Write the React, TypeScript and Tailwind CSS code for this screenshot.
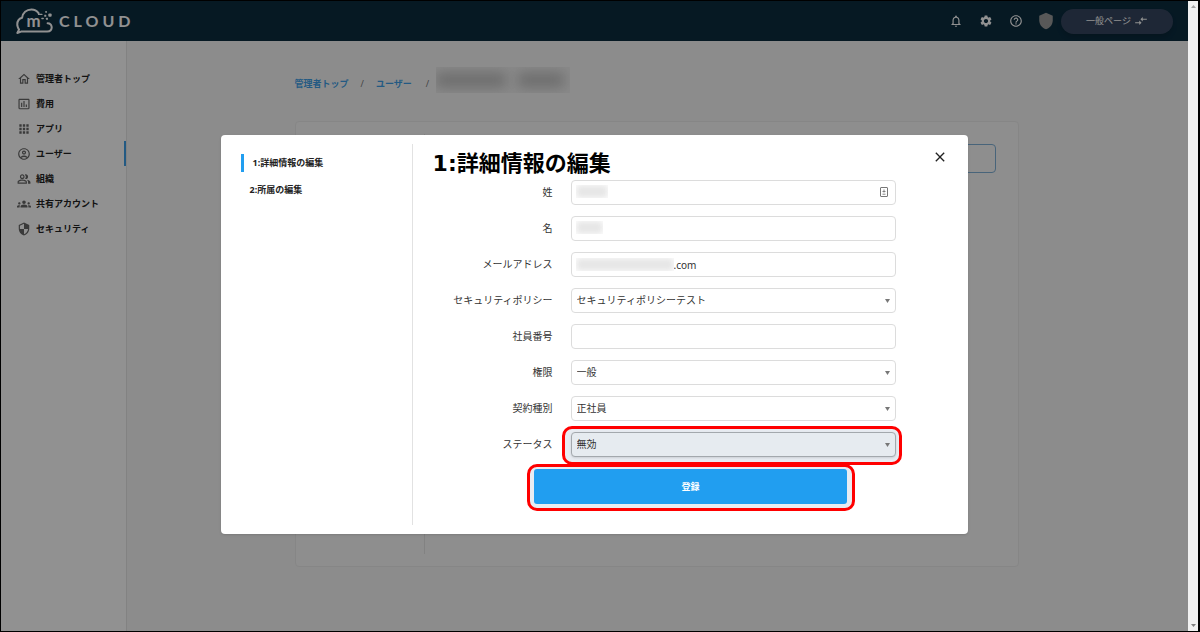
import React from 'react';
import {
  MdApps,
  MdClose,
  MdCompareArrows,
  MdGroups,
  MdHelpOutline,
  MdInsertChartOutlined,
  MdNotificationsNone,
  MdOutlineAccountCircle,
  MdOutlineHome,
  MdOutlinePeopleAlt,
  MdSecurity,
  MdSettings,
  MdShield,
} from 'react-icons/md';
import type { IconType } from 'react-icons';

interface NavItem {
  label: string;
  icon: IconType;
  active?: boolean;
}

const navItems: NavItem[] = [
  { label: '管理者トップ', icon: MdOutlineHome },
  { label: '費用', icon: MdInsertChartOutlined },
  { label: 'アプリ', icon: MdApps },
  { label: 'ユーザー', icon: MdOutlineAccountCircle, active: true },
  { label: '組織', icon: MdOutlinePeopleAlt },
  { label: '共有アカウント', icon: MdGroups },
  { label: 'セキュリティ', icon: MdSecurity },
];

const headerIcons: { label: string; icon: IconType }[] = [
  { label: '通知', icon: MdNotificationsNone },
  { label: '設定', icon: MdSettings },
  { label: 'ヘルプ', icon: MdHelpOutline },
];

const controlClass =
  'block h-[25px] w-full appearance-none rounded border border-[#dcdcdc] bg-white px-[5px] text-[10px] text-[#333] outline-none';

function Logo() {
  return (
    <a href="#" className="flex items-center gap-[6px] text-white" aria-label="m CLOUD">
      <svg viewBox="47 22 110 77" className="h-[26px] w-[37px]" fill="none" stroke="currentColor" strokeWidth="6" strokeLinecap="round" strokeLinejoin="round">
        <path d="M114 37C109 30 102 26 93 26C78 26 67 36 65 51C55 54 50 63 51 74C52 79 54 83 56 86L51 96L62 92H140C149 92 154 86 153 78C152 71 147 67 141 67" />
        <path d="M114 41H124M124 53H128" strokeWidth="4" />
        <text x="99" y="79" textAnchor="middle" fontSize="50" fontWeight="700" fill="currentColor" stroke="none" className="font-['Lato',sans-serif]">m</text>
        <g fill="currentColor" stroke="none">
          <rect x="143" y="38" width="10" height="10" rx="3" />
          <rect x="134" y="31" width="5" height="5" rx="1" />
          <rect x="131" y="42" width="6" height="6" rx="1" />
          <rect x="136" y="51" width="6" height="6" rx="1" />
        </g>
      </svg>
      <span className="font-['Lato',sans-serif] text-[16px] leading-none font-bold tracking-[4px]">CLOUD</span>
    </a>
  );
}

function Header() {
  return (
    <header className="flex h-10 items-center justify-between bg-[#0b2c3f] pr-[15px] pl-[15px]">
      <Logo />
      <div className="flex items-center">
        {headerIcons.map(({ label, icon: Icon }) => (
          <button key={label} type="button" aria-label={label} className="flex w-[30px] justify-center text-white">
            <Icon className="h-[14px] w-[14px]" />
          </button>
        ))}
        <span className="flex w-[30px] justify-center text-[#9c9c9c]">
          <MdShield className="h-[18px] w-[18px]" />
        </span>
        <button type="button" className="flex h-[25px] w-28 items-center justify-center gap-[3px] rounded-full bg-[#36465f] text-[9px] text-white shadow-md">
          一般ページ
          <MdCompareArrows className="h-[14px] w-[14px]" />
        </button>
      </div>
    </header>
  );
}

function Sidebar() {
  return (
    <nav className="w-[126px] shrink-0 border-r border-[#e4e4e4] bg-white pt-[25px]">
      <ul>
        {navItems.map(({ label, icon: Icon, active }) => (
          <li key={label} className={active ? 'border-r-2 border-[#3f9fe6]' : 'border-r-2 border-transparent'}>
            <a href="#" className="flex h-[25px] items-center gap-[5px] pl-4 text-[9px] font-bold text-[#222]">
              <Icon className="h-[14px] w-[14px] text-[#666]" />
              {label}
            </a>
          </li>
        ))}
      </ul>
    </nav>
  );
}

// Name hidden behind a mosaic
function Redacted({ className }: { className: string }) {
  return (
    <span className={`block overflow-hidden ${className}`}>
      <span className="block h-full w-full bg-[#e6e6e6] blur-[3px]" />
    </span>
  );
}

function UserPage() {
  return (
    <main className="flex-1 bg-[#f7f7f7] pt-6 pr-[26px] pl-6">
      <div className="mx-auto max-w-[724px]">
        <div className="flex h-[30px] items-center text-[9px] text-[#777]">
          <a href="#" className="mt-2 font-bold text-[#3f9fe6]">管理者トップ</a>
          <span className="mx-3 mt-2">/</span>
          <a href="#" className="mt-2 font-bold text-[#3f9fe6]">ユーザー</a>
          <span className="mt-2 ml-[14px]">/</span>
          <div className="ml-[7px] flex h-[26px] w-[134px] items-center gap-3 overflow-hidden bg-[#f1f1f1]">
            <span className="h-4 w-[70px] bg-[#c4c4c4] blur-[6px]" />
            <span className="h-4 w-[46px] bg-[#c4c4c4] blur-[6px]" />
          </div>
        </div>
        <section className="mt-[26px] flex h-[446px] rounded border border-[#ebebeb] bg-[#fafafa]">
          <div className="my-3 w-[129px] border-r border-[#e4e4e4]" />
          <div className="flex flex-1 justify-end pt-[22px] pr-[22px]">
            <button type="button" aria-label="編集" className="h-[29px] w-[120px] rounded border border-[#7fb0d6]" />
          </div>
        </section>
      </div>
    </main>
  );
}

function Field({ id, label, children }: { id: string; label: string; children: React.ReactNode }) {
  return (
    <div className="flex items-center gap-[18px]">
      <label htmlFor={id} className="w-[140px] shrink-0 text-right text-[10px] text-[#333]">
        {label}
      </label>
      <div className="relative flex-1">{children}</div>
    </div>
  );
}

function Select({ id, value, highlighted }: { id: string; value: string; highlighted?: boolean }) {
  return (
    <>
      {highlighted && (
        <span className="absolute -top-[6px] -right-[6px] -bottom-[8px] -left-[9px] rounded-[10px] border-3 border-[#ff0000] bg-[#e8ecf2]" />
      )}
      <select
        id={id}
        defaultValue={value}
        className={highlighted ? `${controlClass} relative border-[#a3a8ad]! bg-[#e6ebf0]! shadow-sm` : controlClass}
      >
        <option>{value}</option>
      </select>
      <svg viewBox="0 0 5 4" className="pointer-events-none absolute top-[11px] right-[6px] h-[4px] w-[5px]" fill="#777">
        <path d="M0 0h5L2.500 4z" />
      </svg>
    </>
  );
}

function EditForm() {
  return (
    <form className="pr-[72px]">
      <div className="flex flex-col gap-[11px]">
        <Field id="lastName" label="姓">
          <input id="lastName" type="text" className={controlClass} />
          <Redacted className="absolute top-[5px] left-[5px] h-[13px] w-[32px]" />
          <svg viewBox="0 0 8 10" className="absolute top-[7px] right-[8px] h-[10px] w-[8px]" fill="none" stroke="#777">
            <rect x="0.5" y="0.5" width="7" height="9" rx="0.5" />
            <path d="M4 2.5v3M2.5 4.5h3M2.5 7.2h3" strokeWidth="0.9" />
          </svg>
        </Field>
        <Field id="firstName" label="名">
          <input id="firstName" type="text" className={controlClass} />
          <Redacted className="absolute top-[5px] left-[5px] h-[13px] w-[27px]" />
        </Field>
        <Field id="email" label="メールアドレス">
          <input id="email" type="text" defaultValue=".com" className={`${controlClass} pl-[102px]!`} />
          <Redacted className="absolute top-[6px] left-[5px] h-[13px] w-[98px]" />
        </Field>
        <Field id="policy" label="セキュリティポリシー">
          <Select id="policy" value="セキュリティポリシーテスト" />
        </Field>
        <Field id="employeeNo" label="社員番号">
          <input id="employeeNo" type="text" className={controlClass} />
        </Field>
        <Field id="role" label="権限">
          <Select id="role" value="一般" />
        </Field>
        <Field id="contract" label="契約種別">
          <Select id="contract" value="正社員" />
        </Field>
        <Field id="status" label="ステータス">
          <Select id="status" value="無効" highlighted />
        </Field>
      </div>
      <div className="relative mt-3 -mr-[72px] px-[121px]">
        <span className="absolute -top-[5px] right-[113px] -bottom-[7px] left-[114px] rounded-[10px] border-3 border-[#ff0000] bg-[#e8ecf2]" />
        <button type="button" className="relative block h-[35px] w-full rounded-[3px] bg-[#219ef0] text-[9px] font-bold text-white">
          登録
        </button>
      </div>
    </form>
  );
}

function EditDialog() {
  return (
    <div role="dialog" aria-labelledby="dialogTitle" className="relative mx-auto mt-[134px] flex w-[63%] rounded bg-white py-[9px] shadow-sm">
      <nav className="flex w-48 shrink-0 flex-col gap-[9px] border-r border-[#e2e2e2] pt-[10px] pl-5 text-[9px] leading-[18px] font-bold text-[#222]">
        <a href="#" className="border-l-3 border-[#219ef0] pl-[9px]">1:詳細情報の編集</a>
        <a href="#" className="pl-[9px]">2:所属の編集</a>
      </nav>
      <div className="flex-1 pb-[21px]">
        <h1 id="dialogTitle" className="pt-1 pl-[20px] font-['DejaVu_Sans','Noto_Sans_CJK_JP',sans-serif] text-[22px] leading-8 font-bold text-black">
          1:詳細情報の編集
        </h1>
        <EditForm />
      </div>
      <button type="button" aria-label="閉じる" className="absolute top-[14px] right-[20px] text-[#222]">
        <MdClose className="h-4 w-4" />
      </button>
    </div>
  );
}

function Scrollbar() {
  return (
    <div className="flex w-[10px] shrink-0 flex-col items-center justify-between bg-[#f1f1f1] py-1">
      <svg viewBox="0 0 5 3" className="h-[3px] w-[5px]" fill="#a3a3a3"><path d="M0 3h5L2.500 0z" /></svg>
      <svg viewBox="0 0 5 3" className="h-[3px] w-[5px]" fill="#808080"><path d="M0 0h5L2.500 3z" /></svg>
    </div>
  );
}

export default function App() {
  return (
    <div className="flex min-h-screen bg-black pt-px pr-[2px] pb-px pl-px font-['Noto_Sans','Noto_Sans_CJK_JP',sans-serif]">
      <div className="relative flex flex-1 flex-col">
        <Header />
        <div className="flex flex-1">
          <Sidebar />
          <UserPage />
        </div>
        <div className="absolute inset-0 bg-black/43" />
        <div className="absolute inset-x-0 top-0">
          <EditDialog />
        </div>
      </div>
      <Scrollbar />
    </div>
  );
}
